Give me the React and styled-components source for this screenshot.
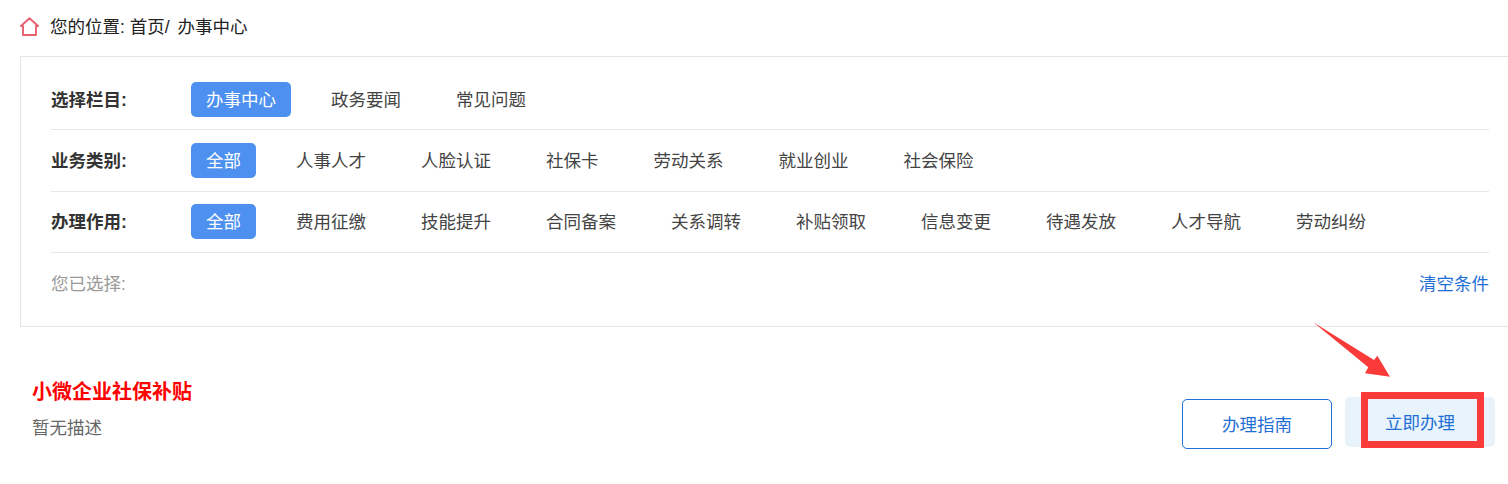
import React from 'react';
import styled, { createGlobalStyle } from 'styled-components';

const GlobalStyle = createGlobalStyle`
  html, body {
    margin: 0;
    padding: 0;
    background: #fff;
    overflow: hidden;
  }
  body {
    font-family: "Liberation Sans", "Noto Sans CJK SC", sans-serif;
    font-size: 17.5px;
    color: #333;
  }
`;

const Page = styled.div`
  position: relative;
  width: 1508px;
  height: 484px;
`;

const Crumb = styled.div`
  display: flex;
  align-items: center;
  height: 56px;
  padding-left: 20px;
  padding-bottom: 6px;
  box-sizing: border-box;
  color: #222;
  svg {
    margin: 3px 11px 0 0;
  }
`;

const Slash = styled.span`
  margin-right: 3px;
`;

const Panel = styled.div`
  margin-left: 20px;
  height: 271px;
  box-sizing: border-box;
  border: 1px solid #e5e5e5;
  border-right: 0;
  padding: 12px 19px 0 30px;
`;

const Row = styled.div`
  display: flex;
  align-items: center;
  height: ${(p) => p.$height}px;
  padding-bottom: ${(p) => p.$lift || 0}px;
  border-bottom: ${(p) => (p.$last ? '0' : '1px solid #e8e8e8')};
  box-sizing: border-box;
`;

const Label = styled.div`
  width: 140px;
  flex: none;
  margin-top: -2px;
  font-weight: 700;
  color: #333;
`;

const Tags = styled.div`
  display: flex;
  gap: 25px;
`;

const Tag = styled.div`
  height: 35px;
  line-height: 37px;
  padding: 0 15px;
  border-radius: 5px;
  color: ${(p) => (p.$active ? '#fff' : '#444')};
  background: ${(p) => (p.$active ? '#4d90f0' : 'transparent')};
`;

const Chosen = styled.div`
  margin-top: -2px;
  color: #999;
`;

const Clear = styled.div`
  margin: -2px 0 0 auto;
  color: #1f6fd6;
`;

const Detail = styled.div`
  display: flex;
  padding: 51px 13px 0 32px;
`;

const Info = styled.div`
  flex: 1;
`;

const Title = styled.div`
  font-size: 20px;
  line-height: 28px;
  font-weight: 700;
  color: #f00;
`;

const Desc = styled.div`
  margin-top: 8px;
  line-height: 28px;
  color: #666;
`;

const Action = styled.div`
  width: 150px;
  height: 50px;
  line-height: ${(p) => (p.$primary ? '53px' : '50px')};
  margin-top: ${(p) => (p.$primary ? '19px' : '21px')};
  margin-left: ${(p) => (p.$primary ? '13px' : '0')};
  box-sizing: border-box;
  text-align: center;
  border-radius: 5px;
  color: #1f6fd6;
  background: ${(p) => (p.$primary ? '#e8f3fb' : '#fff')};
  border: ${(p) => (p.$primary ? '0' : '1px solid #1f6fd6')};
`;

// red markup drawn over the screenshot
const MarkBox = styled.div`
  position: absolute;
  left: 1361px;
  top: 392px;
  width: 123px;
  height: 56px;
  box-sizing: border-box;
  border: 7px solid #fb3a3a;
`;

const MarkArrow = styled.svg`
  position: absolute;
  left: 1310px;
  top: 320px;
`;

const columns = ['办事中心', '政务要闻', '常见问题'];
const kinds = ['全部', '人事人才', '人脸认证', '社保卡', '劳动关系', '就业创业', '社会保险'];
const uses = ['全部', '费用征缴', '技能提升', '合同备案', '关系调转', '补贴领取', '信息变更', '待遇发放', '人才导航', '劳动纠纷'];

const TagList = ({ items }) => (
  <Tags>
    {items.map((t, i) => (
      <Tag key={t} $active={i === 0}>
        {t}
      </Tag>
    ))}
  </Tags>
);

const App = () => (
  <Page>
    <GlobalStyle />
    <Crumb>
      <svg width="19" height="19" viewBox="0 0 19 19" fill="none" stroke="#e8606e" strokeWidth="1.9" strokeLinejoin="round">
        <path d="M1 9 L9.5 1.2 L18 9 H16 V18 H3 V9 Z" />
      </svg>
      <span>
        您的位置: 首页<Slash>/</Slash> 办事中心
      </span>
    </Crumb>
    <Panel>
      <Row $height={61}>
        <Label>选择栏目:</Label>
        <TagList items={columns} />
      </Row>
      <Row $height={62}>
        <Label>业务类别:</Label>
        <TagList items={kinds} />
      </Row>
      <Row $height={61} $lift={1}>
        <Label>办理作用:</Label>
        <TagList items={uses} />
      </Row>
      <Row $height={61} $last>
        <Chosen>您已选择:</Chosen>
        <Clear>清空条件</Clear>
      </Row>
    </Panel>
    <Detail>
      <Info>
        <Title>小微企业社保补贴</Title>
        <Desc>暂无描述</Desc>
      </Info>
      <Action>办理指南</Action>
      <Action $primary>立即办理</Action>
    </Detail>
    <MarkBox />
    <MarkArrow width="84" height="60" viewBox="0 0 84 60">
      <path d="M3.3 2.3 L64 40 L67.3 35.7 L80 56.7 L55 53.3 L58.3 47.3 Z" fill="#fb3a3a" />
    </MarkArrow>
  </Page>
);

export default App;
